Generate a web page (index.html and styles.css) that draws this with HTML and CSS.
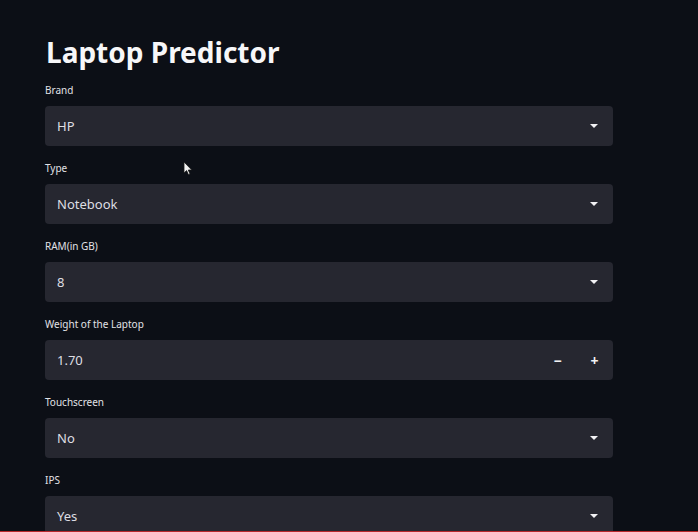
FILE: index.html
```html
<!DOCTYPE html>
<html lang="en">
<head>
<meta charset="utf-8">
<title>Laptop Predictor</title>
<link rel="stylesheet" href="styles.css">
</head>
<body>
<div class="screen">
  <main class="main">
    <h1 class="title">Laptop Predictor</h1>

    <div class="field">
      <label class="label">Brand</label>
      <div class="box"><span class="value">HP</span><span class="caret"></span></div>
    </div>

    <div class="field">
      <label class="label">Type</label>
      <div class="box"><span class="value">Notebook</span><span class="caret"></span></div>
    </div>

    <div class="field">
      <label class="label">RAM(in GB)</label>
      <div class="box"><span class="value">8</span><span class="caret"></span></div>
    </div>

    <div class="field">
      <label class="label">Weight of the Laptop</label>
      <div class="box box-number"><span class="value">1.70</span>
        <span class="steppers"><span class="step">&minus;</span><span class="step">+</span></span>
      </div>
    </div>

    <div class="field">
      <label class="label">Touchscreen</label>
      <div class="box"><span class="value">No</span><span class="caret"></span></div>
    </div>

    <div class="field">
      <label class="label">IPS</label>
      <div class="box"><span class="value">Yes</span><span class="caret"></span></div>
    </div>

    <svg class="cursor" width="10" height="15" viewBox="0 0 10 15">
      <path d="M1 1 L1 12 L3.6 9.6 L5.4 13.6 L7 12.9 L5.3 9 L8.8 9 Z" fill="#f2f2f2" stroke="#1a1a1a" stroke-width="0.8"/>
    </svg>
  </main>
  <div class="bottom-line"></div>
</div>
</body>
</html>
```

FILE: styles.css
```css
html, body {
  margin: 0;
  padding: 0;
  background: #0c0f16;
}

.screen {
  width: 698px;
  height: 532px;
  display: flex;
  flex-direction: column;
  overflow: hidden;
}

.main {
  position: relative;
  flex: 1;
  overflow: hidden;
  padding: 0 0 0 45px;
  font-family: "Noto Sans", "Open Sans", sans-serif;
  color: #f4f4f6;
}

.title {
  margin: 34px 0 0 1px;
  font-size: 28px;
  line-height: 36px;
  font-weight: 700;
  color: #f7f7f9;
  letter-spacing: 0;
}

.field {
  width: 568px;
  margin-top: 12px;
}

.field + .field {
  margin-top: 14px;
}

.label {
  display: block;
  height: 16px;
  line-height: 16px;
  font-size: 10px;
  color: #e2e2e6;
  margin-bottom: 8px;
}

.box {
  height: 40px;
  background: #262730;
  border-radius: 4px;
  display: flex;
  align-items: center;
  padding: 0 15px 0 12px;
  box-sizing: border-box;
}

.box-number {
  padding-right: 13px;
}

.value {
  flex: 1;
  font-size: 13px;
  color: #dedee3;
}

.caret {
  width: 0;
  height: 0;
  border-left: 4px solid transparent;
  border-right: 4px solid transparent;
  border-top: 4px solid #f2f2f4;
}

.steppers {
  display: flex;
  gap: 26px;
  align-items: center;
}

.step {
  width: 11px;
  text-align: center;
  font-size: 14px;
  font-weight: 700;
  color: #f2f2f4;
}

.cursor {
  position: absolute;
  left: 183px;
  top: 161px;
}

.bottom-line {
  height: 1px;
  background: #b8272c;
}
```
